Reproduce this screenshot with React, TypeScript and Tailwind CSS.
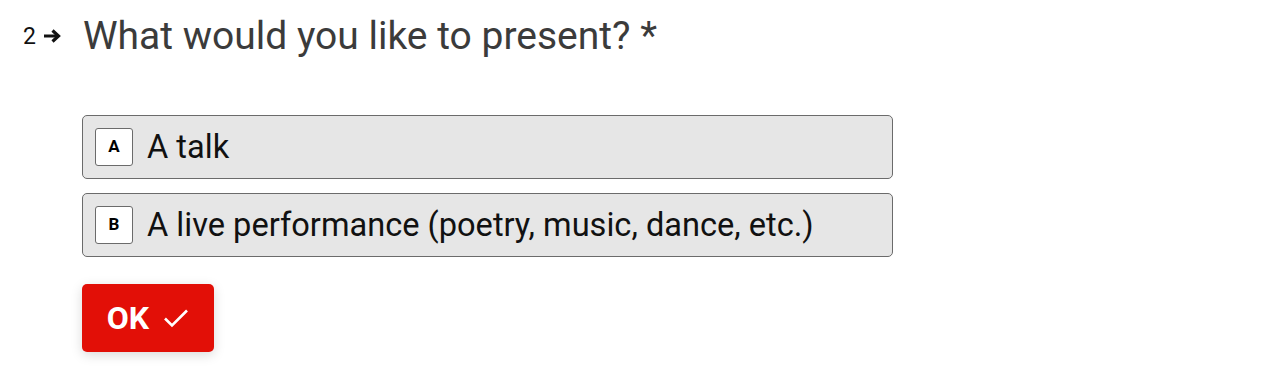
import React from "react";

function Option({ k, label }: { k: string; label: string }) {
  return (
    <div className="flex h-[64px] w-[811px] items-center rounded-[5px] border-[1.5px] border-[#6b6b6b] bg-[#e6e6e6] pl-[12px]">
      <div className="flex h-[38px] w-[38px] items-center justify-center rounded-[3px] border border-[#6b6b6b] bg-white text-[17px] font-bold text-black">
        {k}
      </div>
      <span className="ml-[14px] text-[32.6px] leading-none text-[#111]">{label}</span>
    </div>
  );
}

export default function App() {
  return (
    <div className="h-[371px] w-[1280px] bg-white" style={{ fontFamily: "Roboto, 'Liberation Sans', sans-serif" }}>
      <div className="flex items-center pt-[12px]">
        <div className="flex w-[83px] items-center pl-[23px]">
          <span className="text-[23px] leading-none text-[#111]">2</span>
          <svg className="ml-[7px]" width="18" height="14" viewBox="0 0 18 14">
            <path d="M1 7h14" fill="none" stroke="#111" strokeWidth="3" />
            <path d="M9.5 1.5L15.5 7l-6 5.5" fill="none" stroke="#111" strokeWidth="3.2" />
          </svg>
        </div>
        <h1 className="text-[39px] leading-[48px] text-[#3b3b3b]">What would you like to present? *</h1>
      </div>
      <div className="ml-[82px] mt-[55px] flex flex-col gap-[14px]">
        <Option k="A" label="A talk" />
        <Option k="B" label="A live performance (poetry, music, dance, etc.)" />
      </div>
      <div className="ml-[82px] mt-[27px]">
        <button className="flex h-[68px] w-[132px] items-center justify-center gap-[14px] rounded-[5px] bg-[#e20f07] text-[32px] font-bold text-white shadow-[0_3px_12px_rgba(0,0,0,0.15)]">
          OK
          <svg width="26" height="20" viewBox="0 0 26 20">
            <path d="M2 10.5l7 7L24 2.5" fill="none" stroke="white" strokeWidth="2.6" />
          </svg>
        </button>
      </div>
    </div>
  );
}
